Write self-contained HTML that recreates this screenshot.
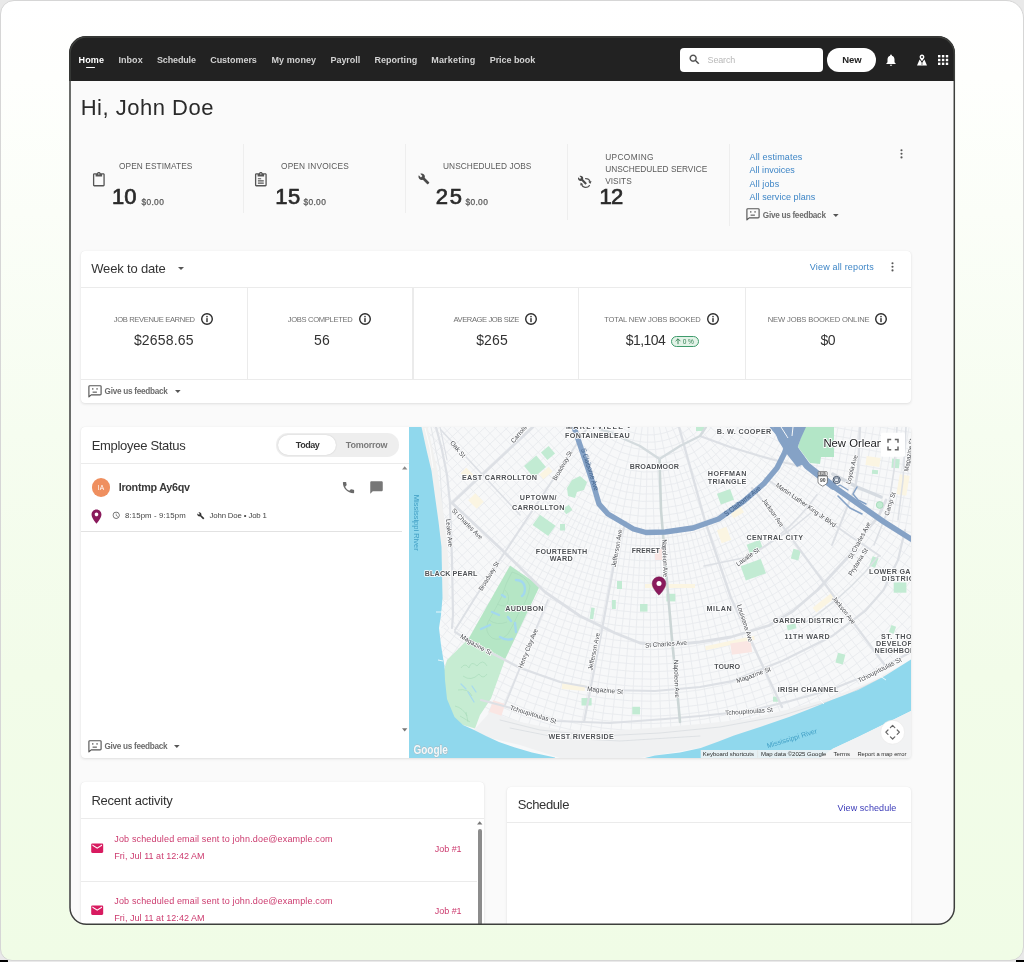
<!DOCTYPE html>
<html>
<head>
<meta charset="utf-8">
<title>Home</title>
<style>
*{box-sizing:border-box;margin:0;padding:0}
html,body{width:1024px;height:962px;overflow:hidden}
body{background:#e9e9e9;font-family:"Liberation Sans",sans-serif;color:#333;position:relative}
.abs{position:absolute}
.t{position:absolute;white-space:pre;line-height:1}
svg{position:absolute;overflow:visible}
#corner-l{left:0;top:960px;width:8px;height:2px;background:#000}
#corner-r{left:1016px;top:960px;width:8px;height:2px;background:#000}
#frame{left:0;top:0;width:1024px;height:961px;border:1px solid #d6d6d6;border-radius:14px 18px 14px 12px;background:linear-gradient(180deg,#ffffff 0%,#fefffd 8%,#fbfef8 22%,#f6fdf0 45%,#f2fce9 70%,#f0fce6 100%)}
#win{left:69px;top:36px;width:886px;height:889px;border-radius:17px;background:#fafafa;overflow:hidden}
#winin{will-change:transform;position:absolute;left:-69px;top:-36px;width:1024px;height:962px}
#nav{left:69px;top:36px;width:886px;height:45px;background:#222}
.card{position:absolute;background:#fff;border-radius:4px;box-shadow:0 1px 3px rgba(0,0,0,.11),0 0 1px rgba(0,0,0,.10)}
.hl{position:absolute;height:1px;background:#ebebeb}
.vl{position:absolute;width:1px;background:#ebebeb}
</style>
</head>
<body>
<div id="corner-l" class="abs"></div><div id="corner-r" class="abs"></div>
<div id="frame" class="abs"></div>
<div id="win" class="abs"><div id="winin">

<!-- nav -->
<div id="nav" class="abs"></div>
<div class="abs" style="left:86px;top:66.5px;width:9.3px;height:1.5px;background:#fff;border-radius:1px"></div>
<div class="abs" style="left:680px;top:48px;width:143px;height:23.5px;background:#fff;border-radius:4px"></div>
<svg style="left:688px;top:53px" width="13" height="13" viewBox="0 0 24 24"><path fill="#444" stroke="#444" stroke-width="0.5" d="M15.5 14h-.79l-.28-.27C15.41 12.59 16 11.11 16 9.5 16 5.91 13.09 3 9.5 3S3 5.91 3 9.5 5.91 16 9.5 16c1.61 0 3.09-.59 4.23-1.57l.27.28v.79l5 4.99L20.49 19l-4.99-5zm-6 0C7.01 14 5 11.99 5 9.5S7.01 5 9.5 5 14 7.01 14 9.5 11.99 14 9.5 14z"/></svg>
<div class="abs" style="left:827px;top:48px;width:48.5px;height:24px;background:#fff;border-radius:12px"></div>
<svg style="left:883.8px;top:52.5px" width="14" height="14" viewBox="0 0 24 24"><path fill="#fff" d="M12 22c1.1 0 2-.9 2-2h-4c0 1.1.89 2 2 2zm6-6v-5c0-3.07-1.64-5.64-4.5-6.32V4c0-.83-.67-1.5-1.5-1.5s-1.5.67-1.5 1.5v.68C7.63 5.36 6 7.92 6 11v5l-2 2v1h16v-1l-2-2z"/></svg>
<svg style="left:916px;top:53.5px" width="12" height="12" viewBox="0 0 12 12"><path fill="#fff" fill-rule="evenodd" d="M6 0.6C4.6 0.6 3.6 1.6 3.6 2.9C3.6 4.4 6 7 6 7S8.4 4.4 8.4 2.9C8.4 1.6 7.4 0.6 6 0.6zM6 1.9a1 1 0 1 1 0 2a1 1 0 0 1 0-2z"/><path fill="#fff" d="M3.6 5.6L1 11.6H11L8.4 5.6L6.9 7.6V8.6H5.1V7.6zM5.4 9.4H6.6V10.6H5.4z" fill-rule="evenodd"/></svg>
<svg style="left:938.1px;top:54.5px" width="11" height="11" viewBox="0 0 11 11" fill="#fff"><rect x="0.00" y="0.00" width="2.4" height="2.4"/><rect x="0.00" y="3.80" width="2.4" height="2.4"/><rect x="0.00" y="7.60" width="2.4" height="2.4"/><rect x="3.90" y="0.00" width="2.4" height="2.4"/><rect x="3.90" y="3.80" width="2.4" height="2.4"/><rect x="3.90" y="7.60" width="2.4" height="2.4"/><rect x="7.80" y="0.00" width="2.4" height="2.4"/><rect x="7.80" y="3.80" width="2.4" height="2.4"/><rect x="7.80" y="7.60" width="2.4" height="2.4"/></svg>
<div class="t" style="left:78.6px;top:56.0px;font-size:9px;color:#fff;font-weight:bold;letter-spacing:0.14px">Home</div>
<div class="t" style="left:118.5px;top:56.0px;font-size:9px;color:#d2d2d2;font-weight:bold;letter-spacing:0.04px">Inbox</div>
<div class="t" style="left:157.0px;top:56.0px;font-size:9px;color:#d2d2d2;font-weight:bold;letter-spacing:-0.15px">Schedule</div>
<div class="t" style="left:210.2px;top:56.0px;font-size:9px;color:#d2d2d2;font-weight:bold;letter-spacing:-0.04px">Customers</div>
<div class="t" style="left:271.4px;top:56.0px;font-size:9px;color:#d2d2d2;font-weight:bold;letter-spacing:0.10px">My money</div>
<div class="t" style="left:330.5px;top:56.0px;font-size:9px;color:#d2d2d2;font-weight:bold;letter-spacing:-0.05px">Payroll</div>
<div class="t" style="left:374.5px;top:56.0px;font-size:9px;color:#d2d2d2;font-weight:bold;letter-spacing:0.02px">Reporting</div>
<div class="t" style="left:431.2px;top:56.0px;font-size:9px;color:#d2d2d2;font-weight:bold;letter-spacing:0.20px">Marketing</div>
<div class="t" style="left:489.7px;top:56.0px;font-size:9px;color:#d2d2d2;font-weight:bold;letter-spacing:-0.05px">Price book</div>
<div class="t" style="left:707.6px;top:56.0px;font-size:9px;color:#b9b9b9;letter-spacing:-0.17px">Search</div>
<div class="t" style="left:842.2px;top:55.0px;font-size:9.5px;color:#222;font-weight:bold">New</div>

<!-- stats -->
<div class="vl" style="left:243px;top:144px;height:69px;background:#eeeeee"></div>
<div class="vl" style="left:405px;top:144px;height:69px;background:#eeeeee"></div>
<div class="vl" style="left:567px;top:144px;height:76px;background:#eeeeee"></div>
<div class="vl" style="left:729px;top:144px;height:82px;background:#eeeeee"></div>
<svg style="left:91px;top:171.6px" width="15.7" height="15.7" viewBox="0 0 24 24"><path fill="#555" d="M19 2h-4.18C14.4.84 13.3 0 12 0c-1.3 0-2.4.84-2.82 2H5c-1.1 0-2 .9-2 2v16c0 1.1.9 2 2 2h14c1.1 0 2-.9 2-2V4c0-1.1-.9-2-2-2zm-7 0c.55 0 1 .45 1 1s-.45 1-1 1-1-.45-1-1 .45-1 1-1zm7 18H5V4h2v3h10V4h2v16z"/></svg>
<svg style="left:253px;top:171.6px" width="15.7" height="15.7" viewBox="0 0 24 24"><path fill="#555" d="M19 2h-4.18C14.4.84 13.3 0 12 0c-1.3 0-2.4.84-2.82 2H5c-1.1 0-2 .9-2 2v16c0 1.1.9 2 2 2h14c1.1 0 2-.9 2-2V4c0-1.1-.9-2-2-2zm-7 0c.55 0 1 .45 1 1s-.45 1-1 1-1-.45-1-1 .45-1 1-1zm7 18H5V4h2v3h10V4h2v16z M7.5 9.5h5v1.7h-5zM7.5 12.8h9v1.7h-9zM7.5 16.1h9v1.7h-9z"/></svg>
<svg style="left:417.5px;top:172.5px" width="11.8" height="11.8" viewBox="0 0 24 24"><path fill="#4a4a4a" d="M22.7 19l-9.1-9.1c.9-2.3.4-5-1.5-6.9-2-2-5-2.4-7.4-1.3L9 6 6 9 1.6 4.7C.4 7.1.9 10.1 2.9 12.1c1.9 1.9 4.6 2.4 6.9 1.5l9.1 9.1c.4.4 1 .4 1.4 0l2.3-2.3c.5-.4.5-1.1.1-1.4z"/></svg>
<svg style="left:577px;top:174.5px" width="16" height="15" viewBox="0 0 16 15"><g fill="none" stroke="#555" stroke-width="1.3" stroke-linecap="round"><path d="M8.6 3.6A4.6 4.6 0 0 1 13.2 7.4"/><path d="M12.4 10.6A4.6 4.6 0 0 1 4.4 9.2"/></g><path fill="#555" d="M14.6 6.2L13.3 9L11.2 6.6zM3.2 10.6L3.6 7.6L6.3 9.2z"/><g transform="translate(0.6,0.4) scale(0.4)"><path fill="#4a4a4a" d="M22.7 19l-9.1-9.1c.9-2.3.4-5-1.5-6.9-2-2-5-2.4-7.4-1.3L9 6 6 9 1.6 4.7C.4 7.1.9 10.1 2.9 12.1c1.9 1.9 4.6 2.4 6.9 1.5l9.1 9.1c.4.4 1 .4 1.4 0l2.3-2.3c.5-.4.5-1.1.1-1.4z"/></g></svg>
<svg style="left:746.2px;top:208.3px" width="14" height="13" viewBox="0 0 14 13"><path fill="none" stroke="#555" stroke-width="1.15" stroke-linejoin="round" d="M1.8 0.7H12.2Q13.1 0.7 13.1 1.6V8.9Q13.1 9.8 12.2 9.8H3.2L0.9 11.9V1.6Q0.9 0.7 1.8 0.7z"/><rect x="4.1" y="3.2" width="1.3" height="1.4" fill="#555"/><rect x="8.4" y="3.2" width="1.3" height="1.4" fill="#555"/><rect x="4.6" y="6.6" width="4.3" height="1.1" fill="#555"/></svg>
<svg style="left:832.8px;top:213.9px" width="5.6" height="3" viewBox="0 0 10 5"><path fill="#555" d="M0 0h10L5 5z"/></svg>
<svg style="left:899.5px;top:148.6px" width="3" height="10" viewBox="0 0 3 10" fill="#555"><circle cx="1.5" cy="1.2" r="1.05"/><circle cx="1.5" cy="4.8" r="1.05"/><circle cx="1.5" cy="8.4" r="1.05"/></svg>
<div class="t" style="left:119.0px;top:162.0px;font-size:8.3px;color:#5a5a5a;letter-spacing:0.09px">OPEN ESTIMATES</div>
<div class="t" style="left:112.0px;top:186.0px;font-size:22px;color:#2a2a2a;letter-spacing:0.08px;-webkit-text-stroke:0.7px #2a2a2a">10</div>
<div class="t" style="left:141.4px;top:198.0px;font-size:8.4px;color:#5a5a5a;letter-spacing:0.36px;-webkit-text-stroke:0.25px #5a5a5a">$0.00</div>
<div class="t" style="left:281.0px;top:162.0px;font-size:8.3px;color:#5a5a5a;letter-spacing:0.19px">OPEN INVOICES</div>
<div class="t" style="left:275.2px;top:186.0px;font-size:22px;color:#2a2a2a;letter-spacing:0.61px;-webkit-text-stroke:0.7px #2a2a2a">15</div>
<div class="t" style="left:303.4px;top:198.0px;font-size:8.4px;color:#5a5a5a;letter-spacing:0.36px;-webkit-text-stroke:0.25px #5a5a5a">$0.00</div>
<div class="t" style="left:443.0px;top:162.0px;font-size:8.3px;color:#5a5a5a;letter-spacing:0.08px">UNSCHEDULED JOBS</div>
<div class="t" style="left:435.7px;top:186.0px;font-size:22px;color:#2a2a2a;letter-spacing:1.74px;-webkit-text-stroke:0.7px #2a2a2a">25</div>
<div class="t" style="left:465.4px;top:198.0px;font-size:8.4px;color:#5a5a5a;letter-spacing:0.36px;-webkit-text-stroke:0.25px #5a5a5a">$0.00</div>
<div class="t" style="left:605.2px;top:153.0px;font-size:8.3px;color:#5a5a5a;letter-spacing:0.38px">UPCOMING</div>
<div class="t" style="left:605.2px;top:165.0px;font-size:8.3px;color:#5a5a5a;letter-spacing:0.02px">UNSCHEDULED SERVICE</div>
<div class="t" style="left:605.2px;top:177.0px;font-size:8.3px;color:#5a5a5a;letter-spacing:0.04px">VISITS</div>
<div class="t" style="left:599.6px;top:186.0px;font-size:22px;color:#2a2a2a;letter-spacing:-0.72px;-webkit-text-stroke:0.7px #2a2a2a">12</div>
<div class="t" style="left:749.5px;top:153.0px;font-size:9px;color:#3d85c6;letter-spacing:0.15px">All estimates</div>
<div class="t" style="left:749.5px;top:166.0px;font-size:9px;color:#3d85c6;letter-spacing:0.03px">All invoices</div>
<div class="t" style="left:749.5px;top:180.0px;font-size:9px;color:#3d85c6;letter-spacing:0.09px">All jobs</div>
<div class="t" style="left:749.5px;top:193.0px;font-size:9px;color:#3d85c6;letter-spacing:0.05px">All service plans</div>
<div class="t" style="left:762.8px;top:212.0px;font-size:8.2px;color:#6c6c6c;font-weight:bold;letter-spacing:-0.28px">Give us feedback</div>

<!-- week -->
<div class="card" style="left:81px;top:251px;width:830px;height:152px"></div>
<div class="hl" style="left:81px;top:287px;width:830px"></div>
<div class="hl" style="left:81px;top:379px;width:830px"></div>
<div class="vl" style="left:246.5px;top:288px;height:91px"></div>
<div class="vl" style="left:412.0px;top:288px;height:91px"></div>
<div class="vl" style="left:413.0px;top:288px;height:91px"></div>
<div class="vl" style="left:578.0px;top:288px;height:91px"></div>
<div class="vl" style="left:744.5px;top:288px;height:91px"></div>
<svg style="left:177.7px;top:267px" width="6" height="3.2" viewBox="0 0 10 5"><path fill="#555" d="M0 0h10L5 5z"/></svg>
<svg style="left:891.1px;top:261.8px" width="3" height="10" viewBox="0 0 3 10" fill="#555"><circle cx="1.5" cy="1.2" r="1.05"/><circle cx="1.5" cy="4.8" r="1.05"/><circle cx="1.5" cy="8.4" r="1.05"/></svg>
<svg style="left:200.2px;top:311.9px" width="14" height="14" viewBox="0 0 14 14"><circle cx="7" cy="7" r="5.3" fill="none" stroke="#2c2c2c" stroke-width="1.4"/><rect x="6.3" y="3.9" width="1.4" height="1.4" fill="#2c2c2c"/><rect x="6.3" y="6.1" width="1.4" height="4" fill="#2c2c2c"/></svg>
<svg style="left:358.0px;top:311.9px" width="14" height="14" viewBox="0 0 14 14"><circle cx="7" cy="7" r="5.3" fill="none" stroke="#2c2c2c" stroke-width="1.4"/><rect x="6.3" y="3.9" width="1.4" height="1.4" fill="#2c2c2c"/><rect x="6.3" y="6.1" width="1.4" height="4" fill="#2c2c2c"/></svg>
<svg style="left:524.3px;top:311.9px" width="14" height="14" viewBox="0 0 14 14"><circle cx="7" cy="7" r="5.3" fill="none" stroke="#2c2c2c" stroke-width="1.4"/><rect x="6.3" y="3.9" width="1.4" height="1.4" fill="#2c2c2c"/><rect x="6.3" y="6.1" width="1.4" height="4" fill="#2c2c2c"/></svg>
<svg style="left:706.0px;top:311.9px" width="14" height="14" viewBox="0 0 14 14"><circle cx="7" cy="7" r="5.3" fill="none" stroke="#2c2c2c" stroke-width="1.4"/><rect x="6.3" y="3.9" width="1.4" height="1.4" fill="#2c2c2c"/><rect x="6.3" y="6.1" width="1.4" height="4" fill="#2c2c2c"/></svg>
<svg style="left:873.9px;top:311.9px" width="14" height="14" viewBox="0 0 14 14"><circle cx="7" cy="7" r="5.3" fill="none" stroke="#2c2c2c" stroke-width="1.4"/><rect x="6.3" y="3.9" width="1.4" height="1.4" fill="#2c2c2c"/><rect x="6.3" y="6.1" width="1.4" height="4" fill="#2c2c2c"/></svg>
<div class="abs" style="left:670.8px;top:335.8px;width:28px;height:11px;border:1px solid #3f9b6c;border-radius:5.5px;background:#e3f3e8"></div>
<svg style="left:675px;top:338.2px" width="6" height="6.4" viewBox="0 0 6 6.4"><path fill="none" stroke="#2e7d4f" stroke-width="0.9" d="M3 6.2V0.9M0.6 3.2L3 0.8L5.4 3.2"/></svg>
<svg style="left:88.0px;top:384.7px" width="14" height="13" viewBox="0 0 14 13"><path fill="none" stroke="#555" stroke-width="1.15" stroke-linejoin="round" d="M1.8 0.7H12.2Q13.1 0.7 13.1 1.6V8.9Q13.1 9.8 12.2 9.8H3.2L0.9 11.9V1.6Q0.9 0.7 1.8 0.7z"/><rect x="4.1" y="3.2" width="1.3" height="1.4" fill="#555"/><rect x="8.4" y="3.2" width="1.3" height="1.4" fill="#555"/><rect x="4.6" y="6.6" width="4.3" height="1.1" fill="#555"/></svg>
<svg style="left:174.6px;top:390.3px" width="5.6" height="3" viewBox="0 0 10 5"><path fill="#555" d="M0 0h10L5 5z"/></svg>
<div class="t" style="left:91.2px;top:262.0px;font-size:13px;color:#333;letter-spacing:-0.16px">Week to date</div>
<div class="t" style="left:809.8px;top:263.0px;font-size:9px;color:#3d85c6;letter-spacing:0.17px">View all reports</div>
<div class="t" style="left:113.7px;top:316.0px;font-size:7.6px;color:#707070;letter-spacing:-0.35px">JOB REVENUE EARNED</div>
<div class="t" style="left:133.9px;top:333.0px;font-size:14px;color:#333;letter-spacing:0.19px">$2658.65</div>
<div class="t" style="left:287.8px;top:316.0px;font-size:7.6px;color:#707070;letter-spacing:-0.33px">JOBS COMPLETED</div>
<div class="t" style="left:314.1px;top:333.0px;font-size:14px;color:#333;letter-spacing:0.08px">56</div>
<div class="t" style="left:453.4px;top:316.0px;font-size:7.6px;color:#707070;letter-spacing:-0.40px">AVERAGE JOB SIZE</div>
<div class="t" style="left:476.2px;top:333.0px;font-size:14px;color:#333;letter-spacing:0.13px">$265</div>
<div class="t" style="left:604.2px;top:316.0px;font-size:7.6px;color:#707070;letter-spacing:-0.16px">TOTAL NEW JOBS BOOKED</div>
<div class="t" style="left:625.8px;top:333.0px;font-size:14px;color:#333;letter-spacing:-0.55px">$1,104</div>
<div class="t" style="left:767.7px;top:316.0px;font-size:7.6px;color:#707070;letter-spacing:-0.13px">NEW JOBS BOOKED ONLINE</div>
<div class="t" style="left:820.6px;top:333.0px;font-size:14px;color:#333;letter-spacing:-0.52px">$0</div>
<div class="t" style="left:682.7px;top:339.0px;font-size:6.6px;color:#2e7d4f;letter-spacing:1.65px">0%</div>
<div class="t" style="left:104.6px;top:388.0px;font-size:8.2px;color:#6c6c6c;font-weight:bold;letter-spacing:-0.28px">Give us feedback</div>

<!-- emp -->
<div class="card" style="left:81px;top:427px;width:830px;height:331px"></div>
<div class="hl" style="left:81px;top:463px;width:328px"></div>
<div class="abs" style="left:276.4px;top:433.3px;width:122.6px;height:23.4px;border-radius:11.7px;background:#eeeeee"></div>
<div class="abs" style="left:278px;top:434.8px;width:58px;height:20.2px;border-radius:10.1px;background:#fff;box-shadow:0 0 1.5px rgba(0,0,0,.18)"></div>
<svg style="left:402.4px;top:466.2px" width="5.4" height="3.6" viewBox="0 0 10 6"><path fill="#8a8a8a" d="M0 6h10L5 0z"/></svg>
<svg style="left:402.4px;top:728.2px" width="5.4" height="3.6" viewBox="0 0 10 6"><path fill="#777" d="M0 0h10L5 6z"/></svg>
<div class="abs" style="left:91.5px;top:478px;width:18.6px;height:18.6px;border-radius:50%;background:#ef8f5f"></div>
<svg style="left:341px;top:480px" width="15" height="15" viewBox="0 0 24 24"><path fill="#6a6a6a" d="M6.62 10.79c1.44 2.83 3.76 5.14 6.59 6.59l2.2-2.2c.27-.27.67-.36 1.02-.24 1.12.37 2.33.57 3.57.57.55 0 1 .45 1 1V20c0 .55-.45 1-1 1-9.39 0-17-7.61-17-17 0-.55.45-1 1-1h3.5c.55 0 1 .45 1 1 0 1.25.2 2.45.57 3.57.11.35.03.74-.25 1.02l-2.2 2.2z"/></svg>
<svg style="left:369.4px;top:480px" width="15" height="15" viewBox="0 0 24 24"><path fill="#777" d="M20 2H4c-1.1 0-1.99.9-1.99 2L2 22l4-4h14c1.1 0 2-.9 2-2V4c0-1.1-.9-2-2-2z"/></svg>
<svg style="left:87.5px;top:507.5px" width="17" height="17" viewBox="0 0 24 24"><path fill="#8a1a5c" d="M12 2C8.13 2 5 5.13 5 9c0 5.25 7 13 7 13s7-7.75 7-13c0-3.87-3.13-7-7-7zm0 9.5c-1.38 0-2.5-1.12-2.5-2.5s1.12-2.5 2.5-2.5 2.5 1.12 2.5 2.5-1.12 2.5-2.5 2.5z"/></svg>
<svg style="left:111.6px;top:511.4px" width="8.4" height="8.4" viewBox="0 0 24 24"><path fill="#555" d="M11.99 2C6.47 2 2 6.48 2 12s4.47 10 9.99 10C17.52 22 22 17.52 22 12S17.52 2 11.99 2zM12 20c-4.42 0-8-3.58-8-8s3.58-8 8-8 8 3.58 8 8-3.58 8-8 8zm.5-13H11v6l5.25 3.15.75-1.23-4.5-2.67z"/></svg>
<svg style="left:196.5px;top:511.8px" width="7.6" height="7.6" viewBox="0 0 24 24"><path fill="#333" d="M22.7 19l-9.1-9.1c.9-2.3.4-5-1.5-6.9-2-2-5-2.4-7.4-1.3L9 6 6 9 1.6 4.7C.4 7.1.9 10.1 2.9 12.1c1.9 1.9 4.6 2.4 6.9 1.5l9.1 9.1c.4.4 1 .4 1.4 0l2.3-2.3c.5-.4.5-1.1.1-1.4z"/></svg>
<div class="hl" style="left:81px;top:531px;width:321px;background:#e2e2e2"></div>
<svg style="left:87.8px;top:739.8px" width="14" height="13" viewBox="0 0 14 13"><path fill="none" stroke="#555" stroke-width="1.15" stroke-linejoin="round" d="M1.8 0.7H12.2Q13.1 0.7 13.1 1.6V8.9Q13.1 9.8 12.2 9.8H3.2L0.9 11.9V1.6Q0.9 0.7 1.8 0.7z"/><rect x="4.1" y="3.2" width="1.3" height="1.4" fill="#555"/><rect x="8.4" y="3.2" width="1.3" height="1.4" fill="#555"/><rect x="4.6" y="6.6" width="4.3" height="1.1" fill="#555"/></svg>
<svg style="left:174.4px;top:745.4px" width="5.6" height="3" viewBox="0 0 10 5"><path fill="#555" d="M0 0h10L5 5z"/></svg>
<div class="abs" style="left:409px;top:427px;width:502px;height:331px;overflow:hidden;border-radius:0 4px 4px 0;background:#f3f4f5"><svg style="left:0;top:0" width="502" height="331" viewBox="409 427 502 331" font-family="Liberation Sans, sans-serif">
<defs><clipPath id="cw"><polygon points="409,427 590,427 473,601 452,628 409,628"/></clipPath><clipPath id="ce"><polygon points="590,427 911,427 911,758 409,758 409,628 452,628 473,601"/></clipPath></defs>
<filter id="bl" x="0" y="0" width="1" height="1"><feGaussianBlur stdDeviation="0.45"/></filter><g filter="url(#bl)">
<rect x="405" y="423" width="510" height="339" fill="#f7f8f9"/>
<path clip-path="url(#ce)" fill="none" stroke="#e9ebee" stroke-width="0.9" d="M686.6 390.7L998.6 504.2M788.4 432.3L994.8 514.1M736.3 414.5L990.8 523.8M785.1 440.1L986.5 533.4M684.8 394.8L982 542.9M781.3 447.7L977.2 552.2M731.5 424.1L972.1 561.4M777.1 455L966.7 570.5M682.6 398.8L961.1 579.4M772.5 462.1L955.3 588.1M725.7 433.1L949.2 596.7M767.5 469L942.9 605.1M679.9 402.4L936.3 613.3M762.1 475.5L929.5 621.3M718.8 441.4L922.5 629.2M756.4 481.8L915.2 636.8M676.8 405.7L907.8 644.2M750.3 487.7L900.1 651.4M711.1 448.9L892.3 658.4M743.8 493.2L884.2 665.2M673.4 408.7L876 671.7M737.1 498.4L867.6 678M702.6 455.4L859 684.1M730.1 503.2L850.2 689.9M669.7 411.2L841.3 695.5M722.9 507.6L832.2 700.8M693.4 461L823 705.8M715.4 511.5L813.6 710.6M665.7 413.4L804.1 715.1M707.7 515.1L794.5 719.4M683.7 465.5L784.7 723.4M699.8 518.1L774.9 727.1M661.5 415L764.9 730.5M691.7 520.8L754.9 733.6M673.5 468.8L744.8 736.5M683.5 523L734.6 739M657.1 416.2L724.3 741.3M675.2 524.7L714 743.3M662.9 471L703.6 745M666.8 525.9L693.2 746.4M652.6 416.8L682.7 747.5M658.4 526.7L672.2 748.3M652.2 471.9L661.7 748.8M649.9 527L651.2 749M648.1 417L640.7 748.9M641.4 526.8L630.2 748.5M641.5 471.7L619.7 747.8M633 526.1L609.2 746.9M643.6 416.6L598.8 745.6M624.6 525L588.4 744M630.9 470.3L578 742.2M616.2 523.4L567.7 740M639.2 415.8L557.5 737.6M608 521.3L547.3 734.8M620.5 467.6L537.3 731.8M599.9 518.7L527.3 728.5M634.8 414.4L517.4 724.9M592 515.7L507.6 721.1M610.4 463.8L497.9 716.9M584.2 512.3L488.4 712.5M630.7 412.6L479 707.9M576.7 508.4L469.7 702.9M600.9 458.9L460.5 697.7M569.4 504.1L451.5 692.3M626.8 410.3L442.7 686.6M562.3 499.4L434 680.6M591.9 453L425.5 674.4M555.5 494.3L417.2 668M623.2 407.6L409.1 661.3M549.1 488.9L401.1 654.4M583.7 446L393.4 647.3M542.9 483L385.9 640M619.9 404.5L378.5 632.4M537.1 476.9L371.4 624.7M576.4 438.2L364.5 616.7M531.6 470.4L357.9 608.6M617 401L351.4 600.3M526.5 463.6L345.2 591.8M569.9 429.6L339.3 583.1M521.8 456.5L333.6 574.2M614.5 397.2L328.1 565.2M704.2 394.9A58 58 0 0 1 597.8 404.2M711.2 397.2A65.4 65.4 0 0 1 591.3 407.7M718.2 399.5A72.8 72.8 0 0 1 584.7 411.2M725.3 401.8A80.2 80.2 0 0 1 578.2 414.7M732.3 404.1A87.6 87.6 0 0 1 571.7 418.1M739.4 406.4A95 95 0 0 1 565.1 421.6M746.4 408.6A102.4 102.4 0 0 1 558.6 425.1M753.4 410.9A109.8 109.8 0 0 1 552.1 428.5M760.5 413.2A117.2 117.2 0 0 1 545.5 432M767.5 415.5A124.6 124.6 0 0 1 539 435.5M774.5 417.8A132 132 0 0 1 532.5 439M781.6 420.1A139.4 139.4 0 0 1 525.9 442.4M788.6 422.4A146.8 146.8 0 0 1 519.4 445.9M795.7 424.7A154.2 154.2 0 0 1 512.8 449.4M802.7 426.9A161.6 161.6 0 0 1 506.3 452.9M809.7 429.2A169 169 0 0 1 499.8 456.3M816.8 431.5A176.4 176.4 0 0 1 493.2 459.8M823.8 433.8A183.8 183.8 0 0 1 486.7 463.3M830.8 436.1A191.2 191.2 0 0 1 480.2 466.8M837.9 438.4A198.6 198.6 0 0 1 473.6 470.2M844.9 440.7A206 206 0 0 1 467.1 473.7M852 442.9A213.4 213.4 0 0 1 460.6 477.2M859 445.2A220.8 220.8 0 0 1 454 480.7M866 447.5A228.2 228.2 0 0 1 447.5 484.1M873.1 449.8A235.6 235.6 0 0 1 441 487.6M880.1 452.1A243 243 0 0 1 434.4 491.1M887.1 454.4A250.4 250.4 0 0 1 427.9 494.6M894.2 456.7A257.8 257.8 0 0 1 421.4 498M901.2 459A265.2 265.2 0 0 1 414.8 501.5M908.3 461.2A272.6 272.6 0 0 1 408.3 505M915.3 463.5A280 280 0 0 1 401.8 508.5M922.3 465.8A287.4 287.4 0 0 1 395.2 511.9M929.4 468.1A294.8 294.8 0 0 1 388.7 515.4M936.4 470.4A302.2 302.2 0 0 1 382.2 518.9M943.4 472.7A309.6 309.6 0 0 1 375.6 522.3M950.5 475A317 317 0 0 1 369.1 525.8M957.5 477.2A324.4 324.4 0 0 1 362.6 529.3M964.6 479.5A331.8 331.8 0 0 1 356 532.8M971.6 481.8A339.2 339.2 0 0 1 349.5 536.2M978.6 484.1A346.6 346.6 0 0 1 343 539.7M985.7 486.4A354 354 0 0 1 336.4 543.2M992.7 488.7A361.4 361.4 0 0 1 329.9 546.7M999.7 491A368.8 368.8 0 0 1 323.4 550.1"/>
<path clip-path="url(#cw)" fill="none" stroke="#e9ebee" stroke-width="0.9" d="M539.2 128L893.8 508.3M477.4 114.5L97.1 469.1M533.7 133L888.4 513.3M482.7 120.2L102.4 474.8M528.3 138.1L883 518.4M488 125.9L107.7 480.5M522.9 143.1L877.6 523.4M493.3 131.6L113 486.3M517.5 148.2L872.2 528.5M498.6 137.3L118.3 492M512.1 153.2L866.7 533.5M504 143L123.7 497.7M506.7 158.3L861.3 538.6M509.3 148.7L129 503.4M501.3 163.3L855.9 543.6M514.6 154.4L134.3 509.1M495.9 168.4L850.5 548.7M519.9 160.1L139.6 514.8M490.5 173.4L845.1 553.7M525.2 165.8L144.9 520.5M485 178.4L839.7 558.7M530.6 171.5L150.3 526.2M479.6 183.5L834.3 563.8M535.9 177.2L155.6 531.9M474.2 188.5L828.9 568.8M541.2 183L160.9 537.6M468.8 193.6L823.4 573.9M546.5 188.7L166.2 543.3M463.4 198.6L818 578.9M551.8 194.4L171.5 549M458 203.7L812.6 584M557.2 200.1L176.9 554.7M452.6 208.7L807.2 589M562.5 205.8L182.2 560.4M447.2 213.8L801.8 594.1M567.8 211.5L187.5 566.1M441.7 218.8L796.4 599.1M573.1 217.2L192.8 571.8M436.3 223.9L791 604.2M578.4 222.9L198.1 577.5M430.9 228.9L785.6 609.2M583.8 228.6L203.5 583.2M425.5 234L780.1 614.3M589.1 234.3L208.8 588.9M420.1 239L774.7 619.3M594.4 240L214.1 594.6M414.7 244.1L769.3 624.4M599.7 245.7L219.4 600.3M409.3 249.1L763.9 629.4M605 251.4L224.7 606M403.9 254.1L758.5 634.5M610.4 257.1L230.1 611.8M398.4 259.2L753.1 639.5M615.7 262.8L235.4 617.5M393 264.2L747.7 644.5M621 268.5L240.7 623.2M387.6 269.3L742.3 649.6M626.3 274.2L246 628.9M382.2 274.3L736.9 654.6M631.6 279.9L251.3 634.6M376.8 279.4L731.4 659.7M637 285.6L256.7 640.3M371.4 284.4L726 664.7M642.3 291.3L262 646M366 289.5L720.6 669.8M647.6 297L267.3 651.7M360.6 294.5L715.2 674.8M652.9 302.7L272.6 657.4M355.2 299.6L709.8 679.9M658.2 308.5L277.9 663.1M349.7 304.6L704.4 684.9M663.6 314.2L283.3 668.8M344.3 309.7L699 690M668.9 319.9L288.6 674.5M338.9 314.7L693.6 695M674.2 325.6L293.9 680.2M333.5 319.8L688.1 700.1M679.5 331.3L299.2 685.9M328.1 324.8L682.7 705.1M684.8 337L304.5 691.6M322.7 329.8L677.3 710.2M690.2 342.7L309.8 697.3M317.3 334.9L671.9 715.2M695.5 348.4L315.2 703M311.9 339.9L666.5 720.2M700.8 354.1L320.5 708.7M306.4 345L661.1 725.3M706.1 359.8L325.8 714.4M301 350L655.7 730.3M711.4 365.5L331.1 720.1M295.6 355.1L650.3 735.4M716.7 371.2L336.4 725.8M290.2 360.1L644.8 740.4M722.1 376.9L341.8 731.5M284.8 365.2L639.4 745.5M727.4 382.6L347.1 737.3M279.4 370.2L634 750.5M732.7 388.3L352.4 743M274 375.3L628.6 755.6M738 394L357.7 748.7M268.6 380.3L623.2 760.6M743.3 399.7L363 754.4M263.1 385.4L617.8 765.7M748.7 405.4L368.4 760.1M257.7 390.4L612.4 770.7M754 411.1L373.7 765.8M252.3 395.5L607 775.8M759.3 416.8L379 771.5M246.9 400.5L601.6 780.8M764.6 422.5L384.3 777.2M241.5 405.5L596.1 785.9M769.9 428.2L389.6 782.9M236.1 410.6L590.7 790.9M775.3 434L395 788.6M230.7 415.6L585.3 795.9M780.6 439.7L400.3 794.3M225.3 420.7L579.9 801M785.9 445.4L405.6 800M219.9 425.7L574.5 806M791.2 451.1L410.9 805.7M214.4 430.8L569.1 811.1M796.5 456.8L416.2 811.4M209 435.8L563.7 816.1M801.9 462.5L421.6 817.1M203.6 440.9L558.3 821.2M807.2 468.2L426.9 822.8M198.2 445.9L552.8 826.2M812.5 473.9L432.2 828.5M192.8 451L547.4 831.3M817.8 479.6L437.5 834.2M187.4 456L542 836.3M823.1 485.3L442.8 839.9M182 461.1L536.6 841.4M828.5 491L448.2 845.6M176.6 466.1L531.2 846.4M833.8 496.7L453.5 851.3M171.1 471.2L525.8 851.5M839.1 502.4L458.8 857M165.7 476.2L520.4 856.5M844.4 508.1L464.1 862.8M160.3 481.3L515 861.6M849.7 513.8L469.4 868.5M154.9 486.3L509.5 866.6M855.1 519.5L474.8 874.2M149.5 491.3L504.1 871.6M860.4 525.2L480.1 879.9M144.1 496.4L498.7 876.7M865.7 530.9L485.4 885.6M138.7 501.4L493.3 881.7M871 536.6L490.7 891.3M133.3 506.5L487.9 886.8M876.3 542.3L496 897M127.8 511.5L482.5 891.8M881.7 548L501.4 902.7M122.4 516.6L477.1 896.9M887 553.7L506.7 908.4M117 521.6L471.7 901.9M892.3 559.5L512 914.1M111.6 526.7L466.3 907M897.6 565.2L517.3 919.8M106.2 531.7L460.8 912M902.9 570.9L522.6 925.5"/>
<clipPath id="cc"><polygon points="788,427 911,427 911,540 883.5,521.6 858,503.8 832.8,486 807,465.7 792,445"/></clipPath>
<polygon fill="#f7f8f9" points="788,427 911,427 911,540 883.5,521.6 858,503.8 832.8,486 807,465.7 792,445"/>
<path clip-path="url(#cc)" fill="none" stroke="#e9ebee" stroke-width="0.9" d="M781.3 351.3L958.6 382.6M769.1 374.3L737.9 551.6M779.9 359.4L957.1 390.6M776 375.6L744.8 552.8M778.5 367.5L955.7 398.7M782.9 376.8L751.6 554M777 375.5L954.3 406.8M789.8 378L758.5 555.3M775.6 383.6L952.9 414.9M796.7 379.2L765.4 556.5M774.2 391.7L951.4 422.9M803.6 380.4L772.3 557.7M772.8 399.8L950 431M810.5 381.6L779.2 558.9M771.3 407.8L948.6 439.1M817.4 382.9L786.1 560.1M769.9 415.9L947.2 447.2M824.3 384.1L793 561.3M768.5 424L945.8 455.3M831.2 385.3L799.9 562.6M767.1 432.1L944.3 463.3M838.1 386.5L806.8 563.8M765.6 440.1L942.9 471.4M844.9 387.7L813.7 565M764.2 448.2L941.5 479.5M851.8 388.9L820.6 566.2M762.8 456.3L940.1 487.6M858.7 390.2L827.5 567.4M761.4 464.4L938.6 495.6M865.6 391.4L834.4 568.6M759.9 472.4L937.2 503.7M872.5 392.6L841.3 569.8M758.5 480.5L935.8 511.8M879.4 393.8L848.2 571.1M757.1 488.6L934.4 519.9M886.3 395L855.1 572.3M755.7 496.7L932.9 527.9M893.2 396.2L861.9 573.5M754.2 504.7L931.5 536M900.1 397.4L868.8 574.7M752.8 512.8L930.1 544.1M907 398.7L875.7 575.9M751.4 520.9L928.7 552.2M913.9 399.9L882.6 577.1M750 529L927.2 560.2M920.8 401.1L889.5 578.4M748.6 537.1L925.8 568.3M927.7 402.3L896.4 579.6M747.1 545.1L924.4 576.4M934.6 403.5L903.3 580.8M745.7 553.2L923 584.5M941.5 404.7L910.2 582M744.3 561.3L921.5 592.5M948.4 406L917.1 583.2M742.9 569.4L920.1 600.6M955.2 407.2L924 584.4M741.4 577.4L918.7 608.7M962.1 408.4L930.9 585.7"/>
<rect x="527" y="459" width="16" height="15" fill="#c2ebd3" transform="rotate(-40 535 466.5)"/>
<rect x="543" y="448" width="10" height="10" fill="#c2ebd3" transform="rotate(-40 548 453)"/>
<rect x="534.5" y="519" width="19.1" height="12.7" fill="#c2ebd3" transform="rotate(35 544 525.4)"/>
<rect x="563.7" y="506.3" width="7.6" height="6.4" fill="#c2ebd3" transform="rotate(-35 567.5 509.5)"/>
<rect x="560" y="524" width="5" height="6.5" fill="#c2ebd3" transform="rotate(0 562.5 527.2)"/>
<rect x="617" y="581" width="5" height="8" fill="#c2ebd3" transform="rotate(0 619.5 585)"/>
<rect x="718.5" y="491" width="14" height="11.5" fill="#c2ebd3" transform="rotate(-20 725.5 496.8)"/>
<rect x="747.7" y="542" width="14" height="8.8" fill="#c2ebd3" transform="rotate(-20 754.7 546.4)"/>
<rect x="742.6" y="562.2" width="21.4" height="15.2" fill="#c2ebd3" transform="rotate(-20 753.3 569.8)"/>
<rect x="792" y="549.5" width="7.7" height="10.2" fill="#c2ebd3" transform="rotate(15 795.9 554.6)"/>
<rect x="891.8" y="458.8" width="7.6" height="9.2" fill="#c2ebd3" transform="rotate(5 895.6 463.4)"/>
<rect x="872" y="470" width="6" height="4" fill="#c2ebd3" transform="rotate(5 875 472)"/>
<rect x="893.7" y="582.5" width="12.7" height="10.2" fill="#c2ebd3" transform="rotate(0 900 587.6)"/>
<rect x="870.8" y="557" width="6.2" height="10" fill="#c2ebd3" transform="rotate(20 873.9 562)"/>
<rect x="612" y="600" width="3.8" height="9" fill="#c2ebd3" transform="rotate(0 613.9 604.5)"/>
<rect x="640" y="604" width="7.5" height="7.6" fill="#c2ebd3" transform="rotate(0 643.8 607.8)"/>
<rect x="590.4" y="607.8" width="3.6" height="11.2" fill="#c2ebd3" transform="rotate(8 592.2 613.4)"/>
<rect x="581.5" y="698" width="10.1" height="7.5" fill="#c2ebd3" transform="rotate(0 586.5 701.8)"/>
<rect x="632.3" y="706.8" width="7.7" height="7.6" fill="#c2ebd3" transform="rotate(0 636.1 710.6)"/>
<rect x="666.4" y="593.8" width="8.9" height="7.6" fill="#c2ebd3" transform="rotate(0 670.8 597.6)"/>
<rect x="787" y="624.3" width="9" height="5.1" fill="#c2ebd3" transform="rotate(-15 791.5 626.8)"/>
<rect x="836.6" y="653.5" width="7.6" height="10.1" fill="#c2ebd3" transform="rotate(15 840.4 658.5)"/>
<rect x="890" y="625.6" width="5" height="7.4" fill="#c2ebd3" transform="rotate(20 892.5 629.3)"/>
<rect x="773" y="696.7" width="5" height="5" fill="#c2ebd3" transform="rotate(0 775.5 699.2)"/>
<rect x="696" y="427" width="8" height="4" fill="#c2ebd3" transform="rotate(0 700 429)"/>
<polygon fill="#c2ebd3" points="572,480 580,476 587,482 584,490 577,492 575,498 568,496 567,488"/>
<polygon fill="#b3e6c7" points="804,427 834,427 834,457 821,457 820,464 810,463 798,447"/>
<rect x="462" y="470" width="10" height="8" fill="#fbf5e2" transform="rotate(45 467 474)"/>
<rect x="470" y="496" width="12" height="10" fill="#fbf5e2" transform="rotate(45 476 501)"/>
<rect x="540" y="470" width="12" height="6" fill="#fbf5e2" transform="rotate(-40 546 473)"/>
<rect x="562" y="684" width="23" height="6" fill="#fbf5e2" transform="rotate(5 573.5 687)"/>
<rect x="719" y="528" width="10" height="14" fill="#fbf5e2" transform="rotate(-20 724 535)"/>
<rect x="730" y="505" width="12" height="11" fill="#fbf5e2" transform="rotate(-30 736 510.5)"/>
<rect x="866" y="457" width="14" height="9" fill="#fbf5e2" transform="rotate(8 873 461.5)"/>
<rect x="898" y="475" width="10" height="20" fill="#fbf5e2" transform="rotate(10 903 485)"/>
<rect x="645" y="584" width="50" height="4" fill="#fbf5e2" transform="rotate(0 670 586)"/>
<rect x="705" y="641" width="50" height="4" fill="#fbf5e2" transform="rotate(-12 730 643)"/>
<rect x="812" y="600" width="23" height="6" fill="#fbf5e2" transform="rotate(-38 823.5 603)"/>
<rect x="731" y="642" width="20.5" height="11.5" fill="#fae6e3" transform="rotate(-8 741.2 647.8)"/>
<rect x="490" y="701.7" width="12.8" height="17.8" fill="#fae6e3" transform="rotate(18 496.4 710.6)"/>
<rect x="655" y="548" width="7" height="12" fill="#fae6e3" transform="rotate(0 658.5 554)"/>
<polygon fill="#b5e6c5" points="510,565.6 539.8,586 505.2,659 468.7,638.6"/>
<polygon fill="#c6ecd2" points="468.7,638.6 505.2,659 491,698.5 480,715 475,728.5 463,725 453.7,719 446,700 443.4,672 447,660 453.7,653.6"/>
<path fill="none" stroke="#a9dcbb" stroke-width="0.8" d="M512 572q14 4 18 14q-2 14 -10 24q-6 14 -12 24q-8 8 -16 4q-8 -6 -4 -16q8 -14 14 -26q4 -14 10 -24M505 590q6 6 2 14M497 604q8 4 14 0M489 620q8 6 18 2"/>
<path fill="none" stroke="#a3d8ee" stroke-width="2.4" stroke-linecap="round" d="M516 580q8 0 9 8q0 6 -3 8M502 595l3 2M492 612l7 3M508 617l3 4M481 629l9 -4M500 637q6 4 12 2M515 623l1 9"/>
<path fill="none" stroke="#abdcbc" stroke-width="0.7" d="M461 668q4 -6 8 0q2 -8 8 -2q6 -8 10 0M463 676q8 6 16 -2q4 6 8 0M458 690q10 -2 14 6M455 706q8 2 12 10M460 716l10 6M466 712l2 10"/>
<path fill="none" stroke="#a8daee" stroke-width="1.3" stroke-linecap="round" d="M461 684l5 5M468 692l6 10M472 686l4 6"/>
<path fill="none" stroke="#dde0e5" stroke-width="2.2" stroke-linejoin="round" stroke-linecap="round"  d="M436 427 L442 450 L447 475 L450 503 L452 560 L453 615 L452 628"/>
<path fill="none" stroke="#dde0e5" stroke-width="1.2" stroke-linejoin="round" stroke-linecap="round"  d="M440 427 L447 460"/>
<path fill="none" stroke="#e4e7ea" stroke-width="1" stroke-linejoin="round" stroke-linecap="round"  d="M431 427 L440 470 L443 520"/>
<path fill="none" stroke="#dde0e5" stroke-width="2.6" stroke-linejoin="round" stroke-linecap="round"  d="M533 427 L452 503"/>
<path fill="none" stroke="#dde0e5" stroke-width="1.6" stroke-linejoin="round" stroke-linecap="round"  d="M441 430 L520 515"/>
<path fill="none" stroke="#dde0e5" stroke-width="2.8" stroke-linejoin="round" stroke-linecap="round"  d="M452 503 L500 548 L545 592 L580 616 L615 633 L640 643 L665 645.5 L700 642 L731 637 L769 625.5 L793 611 L817.5 590 L848 557 L865.8 531.7 L878.5 516.5 L886 500"/>
<path fill="none" stroke="#dde0e5" stroke-width="2.2" stroke-linejoin="round" stroke-linecap="round"  d="M455 632 L476 645 L520 668 L560 682 L605 690 L655 691 L700 687 L731 681.4 L782 661 L832.8 635.7 L865.8 610.3 L883.5 590 L898 560 L905 530"/>
<path fill="none" stroke="#dde0e5" stroke-width="2.2" stroke-linejoin="round" stroke-linecap="round"  d="M481 700 L500 705 L533 714 L557 721 L610 723 L665 719 L700 716 L749 711 L790 701 L830 690 L870 674 L911 652"/>
<path fill="none" stroke="#ccd6d6" stroke-width="2.6" stroke-linejoin="round" stroke-linecap="round"  d="M659.5 459 L661 510 L665 558 L672 640 L678 700 L680 722"/>
<path fill="none" stroke="#dde0e5" stroke-width="2.2" stroke-linejoin="round" stroke-linecap="round"  d="M626 522 L617 548 L600 640 L584 722"/>
<path fill="none" stroke="#dde0e5" stroke-width="2.4" stroke-linejoin="round" stroke-linecap="round"  d="M679 427 L705 521 L731 598 L782 707"/>
<path fill="none" stroke="#dde0e5" stroke-width="2.2" stroke-linejoin="round" stroke-linecap="round"  d="M752 488 L773 513 L844 610 L887 668"/>
<path fill="none" stroke="#dde0e5" stroke-width="1.8" stroke-linejoin="round" stroke-linecap="round"  d="M765 478 L806 505 L850 536 L880 556"/>
<path fill="none" stroke="#dde0e5" stroke-width="2" stroke-linejoin="round" stroke-linecap="round"  d="M588 427 L562 466 L489 576 L473 601 L455 630"/>
<path fill="none" stroke="#dde0e5" stroke-width="1.8" stroke-linejoin="round" stroke-linecap="round"  d="M548 600 L528 648 L505 705"/>
<path fill="none" stroke="#dde0e5" stroke-width="2.2" stroke-linejoin="round" stroke-linecap="round"  d="M700 436 L730 447 L760 456 L782 462 L800 466"/>
<path fill="none" stroke="#d4dbde" stroke-width="2.4" stroke-linejoin="round" stroke-linecap="round"  d="M600 429 L612 433 L624 439 L640 446 L659.5 459 L680 446 L700 436 L706 427"/>
<path fill="none" stroke="#dde0e5" stroke-width="1.6" stroke-linejoin="round" stroke-linecap="round"  d="M704 566 L748 557 L790 530 L812 512"/>
<path fill="none" stroke="#dde0e5" stroke-width="1.4" stroke-linejoin="round" stroke-linecap="round"  d="M816.9 494.6 L808.3 506 L798.9 516.8 L788.8 526.9 L778 536.3 L766.6 544.9 L754.6 552.7 L745.2 558"/>
<path fill="none" stroke="#dde1e5" stroke-width="1.5" stroke-linejoin="round" stroke-linecap="round"  d="M878.3 556.2 L865.3 571.7 L851.1 586.3 L836.1 599.9 L820 612.4 L803.2 623.8"/>
<path fill="none" stroke="#dde0e5" stroke-width="2.4" stroke-linejoin="round" stroke-linecap="round"  d="M860 427 L858 470 L855 488"/>
<path fill="none" stroke="#d6dbe1" stroke-width="3.4" stroke-linejoin="round" stroke-linecap="round"  d="M832.7 474 L857 487 L881 497"/>
<path fill="none" stroke="#dde0e5" stroke-width="2" stroke-linejoin="round" stroke-linecap="round"  d="M855 488 L846 510 L838 530 L832 545"/>
<path fill="none" stroke="#dde0e5" stroke-width="1.6" stroke-linejoin="round" stroke-linecap="round"  d="M897 427 L894 470 L888 510 L874 545"/>
<path fill="none" stroke="#dde0e5" stroke-width="1.6" stroke-linejoin="round" stroke-linecap="round"  d="M906 427 L903 480 L898 520"/>
<path fill="#f0f1f2" d="M473 731 L490 712 L520 722 L560 730 L610 731 L665 727 L700 724 L749 719 L790 709 L830 698 L870 682 L911 660 L911 668 L860 696 L810 716 L760 730 L700 748 L640 758 L560 758 L520 745 L490 738Z"/>
<path fill="none" stroke="#d9dde1" stroke-width="0.8" stroke-linejoin="round" stroke-linecap="round"  d="M500 720 L540 730 L600 736 L660 733 L720 727 L780 716 L840 698 L911 664"/>
<path fill="none" stroke="#d9dde1" stroke-width="0.8" stroke-linejoin="round" stroke-linecap="round"  d="M510 728 L560 738 L620 741 L700 736"/>
<path fill="none" stroke="#f1f1f0" stroke-width="7" d="M424 427L434 471L441 521L445 560L445 600"/>
<polygon fill="#90d8ed" points="409,427 421.5,427 426.5,450 431.5,471 435.5,500 438.5,521.6 441.5,547 442.5,598 441,615 439,628 441,645 444.4,666 445,680 447,699 454.5,717 463,725 473.6,729.7 486,736 499,742 515,747.5 532,752.5 555,757.6 555,758 409,758"/>
<polygon fill="#90d8ed" points="645,758 655,755.5 680,752.5 700.7,748 718.5,741.5 734,735.5 760,727 789,717 809,709.3 833,699.5 858,690 884,676.5 911,659.5 911,711 883.5,724.6 858,737 832.8,748.7 820,758"/>
<polygon fill="#f1f2f3" points="911,711 883.5,724.6 858,737 832.8,748.7 820,758 911,758"/>
<path fill="none" stroke="#fff" stroke-width="0.8" d="M425 428q6 20 8 40M436 612l6 0M438 660l5 1M880 676l6 4M820 700l4 4M905 650l-8 6"/>
<path fill="none" stroke="#85a2c6" stroke-width="5.4" stroke-linejoin="round" stroke-linecap="round"  d="M574 427 L580 445 L593 483.5 L599 504 L608 514 L633.5 529 L646 532.5 L665 532 L693 528 L718.5 519 L744 501 L764 483.5 L777 468 L784.5 453 L788 443"/>
<path fill="none" stroke="#85a2c6" stroke-width="7" stroke-linejoin="round" stroke-linecap="round"  d="M777 427 L785 436 L792 445 L807 465.7 L832.8 486"/>
<path fill="none" stroke="#85a2c6" stroke-width="5.6" stroke-linejoin="round" stroke-linecap="round"  d="M832.8 486 L858 503.8 L883.5 521.6 L911 539"/>
<polygon fill="#85a2c6" points="773,427 806,427 801,438 797,449 806,463 797,467 786,453 778,440"/>
<path fill="none" stroke="#f7f8f9" stroke-width="1" d="M781 427L788 438M793 427L792 436"/>
<path fill="none" stroke="#85a2c6" stroke-width="2.6" stroke-linejoin="round" stroke-linecap="round"  d="M771 427 L782 440 L790 452"/>
<path fill="none" stroke="#85a2c6" stroke-width="3" stroke-linejoin="round" stroke-linecap="round"  d="M800 427 L794 438 L790 447"/>
<path fill="none" stroke="#85a2c6" stroke-width="2.6" stroke-linejoin="round" stroke-linecap="round"  d="M786 427 L789 436"/>
<path fill="none" stroke="#85a2c6" stroke-width="1.6" stroke-linejoin="round" stroke-linecap="round"  d="M838 496 L850 508 L862 514"/>
<path fill="none" stroke="#85a2c6" stroke-width="1.5" stroke-linejoin="round" stroke-linecap="round"  d="M857 487 L853 494 L858 500 L866 504"/>
<path fill="none" stroke="#85a2c6" stroke-width="1.2" stroke-linejoin="round" stroke-linecap="round"  d="M833 489 L840 485 L848 490"/>
</g>
<text x="598" y="428.5" text-anchor="middle" textLength="64" lengthAdjust="spacing" font-size="7.2" font-weight="bold" fill="#505357" stroke="#fff" stroke-width="1.6" stroke-linejoin="round" paint-order="stroke">MARLYVILLE -</text>
<text x="597.4" y="437.8" text-anchor="middle" textLength="64.7" lengthAdjust="spacing" font-size="7.2" font-weight="bold" fill="#505357" stroke="#fff" stroke-width="1.6" stroke-linejoin="round" paint-order="stroke">FONTAINEBLEAU</text>
<text x="744" y="434" text-anchor="middle" textLength="54.6" lengthAdjust="spacing" font-size="7.2" font-weight="bold" fill="#505357" stroke="#fff" stroke-width="1.6" stroke-linejoin="round" paint-order="stroke">B. W. COOPER</text>
<text x="654.4" y="468.8" text-anchor="middle" textLength="49.3" lengthAdjust="spacing" font-size="7.2" font-weight="bold" fill="#505357" stroke="#fff" stroke-width="1.6" stroke-linejoin="round" paint-order="stroke">BROADMOOR</text>
<text x="499.5" y="480.4" text-anchor="middle" textLength="75" lengthAdjust="spacing" font-size="7.2" font-weight="bold" fill="#505357" stroke="#fff" stroke-width="1.6" stroke-linejoin="round" paint-order="stroke">EAST CARROLLTON</text>
<text x="538.2" y="499.5" text-anchor="middle" textLength="36.8" lengthAdjust="spacing" font-size="7.2" font-weight="bold" fill="#505357" stroke="#fff" stroke-width="1.6" stroke-linejoin="round" paint-order="stroke">UPTOWN/</text>
<text x="538.2" y="510" text-anchor="middle" textLength="52.5" lengthAdjust="spacing" font-size="7.2" font-weight="bold" fill="#505357" stroke="#fff" stroke-width="1.6" stroke-linejoin="round" paint-order="stroke">CARROLLTON</text>
<text x="727.1" y="476.4" text-anchor="middle" textLength="38.6" lengthAdjust="spacing" font-size="7.2" font-weight="bold" fill="#505357" stroke="#fff" stroke-width="1.6" stroke-linejoin="round" paint-order="stroke">HOFFMAN</text>
<text x="727.1" y="483.8" text-anchor="middle" textLength="38.6" lengthAdjust="spacing" font-size="7.2" font-weight="bold" fill="#505357" stroke="#fff" stroke-width="1.6" stroke-linejoin="round" paint-order="stroke">TRIANGLE</text>
<text x="645.9" y="553.3" text-anchor="middle" textLength="28.2" lengthAdjust="spacing" font-size="7.2" font-weight="bold" fill="#505357" stroke="#fff" stroke-width="1.6" stroke-linejoin="round" paint-order="stroke">FRERET</text>
<text x="774.7" y="540" text-anchor="middle" textLength="56.6" lengthAdjust="spacing" font-size="7.2" font-weight="bold" fill="#505357" stroke="#fff" stroke-width="1.6" stroke-linejoin="round" paint-order="stroke">CENTRAL CITY</text>
<text x="561.5" y="553.8" text-anchor="middle" textLength="51.5" lengthAdjust="spacing" font-size="7.2" font-weight="bold" fill="#505357" stroke="#fff" stroke-width="1.6" stroke-linejoin="round" paint-order="stroke">FOURTEENTH</text>
<text x="561.2" y="561.2" text-anchor="middle" textLength="22.9" lengthAdjust="spacing" font-size="7.2" font-weight="bold" fill="#505357" stroke="#fff" stroke-width="1.6" stroke-linejoin="round" paint-order="stroke">WARD</text>
<text x="451.1" y="576" text-anchor="middle" textLength="52.6" lengthAdjust="spacing" font-size="7.2" font-weight="bold" fill="#505357" stroke="#fff" stroke-width="1.6" stroke-linejoin="round" paint-order="stroke">BLACK PEARL</text>
<text x="900.5" y="574" text-anchor="middle" textLength="63" lengthAdjust="spacing" font-size="7.2" font-weight="bold" fill="#505357" stroke="#fff" stroke-width="1.6" stroke-linejoin="round" paint-order="stroke">LOWER GARDEN</text>
<text x="900.4" y="581.2" text-anchor="middle" textLength="37.2" lengthAdjust="spacing" font-size="7.2" font-weight="bold" fill="#505357" stroke="#fff" stroke-width="1.6" stroke-linejoin="round" paint-order="stroke">DISTRICT</text>
<text x="524.4" y="611" text-anchor="middle" textLength="38.1" lengthAdjust="spacing" font-size="7.2" font-weight="bold" fill="#505357" stroke="#fff" stroke-width="1.6" stroke-linejoin="round" paint-order="stroke">AUDUBON</text>
<text x="719.1" y="610.8" text-anchor="middle" textLength="25.2" lengthAdjust="spacing" font-size="7.2" font-weight="bold" fill="#505357" stroke="#fff" stroke-width="1.6" stroke-linejoin="round" paint-order="stroke">MILAN</text>
<text x="808.4" y="623" text-anchor="middle" textLength="70.7" lengthAdjust="spacing" font-size="7.2" font-weight="bold" fill="#505357" stroke="#fff" stroke-width="1.6" stroke-linejoin="round" paint-order="stroke">GARDEN DISTRICT</text>
<text x="807.1" y="639" text-anchor="middle" textLength="45.2" lengthAdjust="spacing" font-size="7.2" font-weight="bold" fill="#505357" stroke="#fff" stroke-width="1.6" stroke-linejoin="round" paint-order="stroke">11TH WARD</text>
<text x="905" y="638.8" text-anchor="middle" textLength="48" lengthAdjust="spacing" font-size="7.2" font-weight="bold" fill="#505357" stroke="#fff" stroke-width="1.6" stroke-linejoin="round" paint-order="stroke">ST. THOMAS</text>
<text x="905" y="645.9" text-anchor="middle" textLength="58" lengthAdjust="spacing" font-size="7.2" font-weight="bold" fill="#505357" stroke="#fff" stroke-width="1.6" stroke-linejoin="round" paint-order="stroke">DEVELOPMENT</text>
<text x="906.3" y="652.9" text-anchor="middle" textLength="63.4" lengthAdjust="spacing" font-size="7.2" font-weight="bold" fill="#505357" stroke="#fff" stroke-width="1.6" stroke-linejoin="round" paint-order="stroke">NEIGHBORHOOD</text>
<text x="727.1" y="668.7" text-anchor="middle" textLength="25.8" lengthAdjust="spacing" font-size="7.2" font-weight="bold" fill="#505357" stroke="#fff" stroke-width="1.6" stroke-linejoin="round" paint-order="stroke">TOURO</text>
<text x="808" y="691.6" text-anchor="middle" textLength="60.7" lengthAdjust="spacing" font-size="7.2" font-weight="bold" fill="#505357" stroke="#fff" stroke-width="1.6" stroke-linejoin="round" paint-order="stroke">IRISH CHANNEL</text>
<text x="581.1" y="738.5" text-anchor="middle" textLength="65.2" lengthAdjust="spacing" font-size="7.2" font-weight="bold" fill="#505357" stroke="#fff" stroke-width="1.6" stroke-linejoin="round" paint-order="stroke">WEST RIVERSIDE</text>
<text x="823.4" y="446.7" font-size="11.3" fill="#202124" stroke="#fff" stroke-width="1.8" paint-order="stroke" style="-webkit-text-stroke:0.35px #202124">New Orleans</text>
<text x="457.8" y="451.4" text-anchor="middle" textLength="20" lengthAdjust="spacingAndGlyphs" font-size="6.6" fill="#484b50" stroke="#fff" stroke-width="1.5" stroke-linejoin="round" paint-order="stroke" transform="rotate(50 457.8 449.2)">Oak St</text>
<text x="525" y="428.9" text-anchor="middle" textLength="40" lengthAdjust="spacingAndGlyphs" font-size="6.6" fill="#484b50" stroke="#fff" stroke-width="1.5" stroke-linejoin="round" paint-order="stroke" transform="rotate(-50 525 426.7)">Carrollton Ave</text>
<text x="562.4" y="467.9" text-anchor="middle" textLength="33" lengthAdjust="spacingAndGlyphs" font-size="6.6" fill="#484b50" stroke="#fff" stroke-width="1.5" stroke-linejoin="round" paint-order="stroke" transform="rotate(-60 562.4 465.7)">Broadway St</text>
<text x="589.9" y="471.7" text-anchor="middle" textLength="44" lengthAdjust="spacingAndGlyphs" font-size="7.2" fill="#3f5f88" stroke="none" stroke-width="1.5" stroke-linejoin="round" paint-order="stroke" transform="rotate(72 589.9 469.5)">S Claiborne Ave</text>
<text x="467.2" y="526.2" text-anchor="middle" textLength="41" lengthAdjust="spacingAndGlyphs" font-size="6.6" fill="#484b50" stroke="#fff" stroke-width="1.5" stroke-linejoin="round" paint-order="stroke" transform="rotate(45 467.2 524)">St Charles Ave</text>
<text x="449.4" y="535.2" text-anchor="middle" textLength="28" lengthAdjust="spacingAndGlyphs" font-size="6.6" fill="#484b50" stroke="#fff" stroke-width="1.5" stroke-linejoin="round" paint-order="stroke" transform="rotate(85 449.4 533)">Leake Ave</text>
<text x="488.8" y="578.4" text-anchor="middle" textLength="33" lengthAdjust="spacingAndGlyphs" font-size="6.6" fill="#484b50" stroke="#fff" stroke-width="1.5" stroke-linejoin="round" paint-order="stroke" transform="rotate(-58 488.8 576.2)">Broadway St</text>
<text x="617" y="550.4" text-anchor="middle" textLength="38" lengthAdjust="spacingAndGlyphs" font-size="6.6" fill="#484b50" stroke="#fff" stroke-width="1.5" stroke-linejoin="round" paint-order="stroke" transform="rotate(-80 617 548.2)">Jefferson Ave</text>
<text x="416.4" y="525" text-anchor="middle" textLength="56" lengthAdjust="spacingAndGlyphs" font-size="7" fill="#3f9ec4" stroke="none" stroke-width="1.5" stroke-linejoin="round" paint-order="stroke" transform="rotate(90 416.4 522.8)">Mississippi River</text>
<text x="665" y="560.6" text-anchor="middle" textLength="38" lengthAdjust="spacingAndGlyphs" font-size="6.6" fill="#484b50" stroke="#fff" stroke-width="1.5" stroke-linejoin="round" paint-order="stroke" transform="rotate(88 665 558.4)">Napoleon Ave</text>
<text x="742.6" y="503.5" text-anchor="middle" textLength="44" lengthAdjust="spacingAndGlyphs" font-size="7.2" fill="#3f5f88" stroke="none" stroke-width="1.5" stroke-linejoin="round" paint-order="stroke" transform="rotate(-38 742.6 501.3)">S Claiborne Ave</text>
<text x="773" y="514.9" text-anchor="middle" textLength="33" lengthAdjust="spacingAndGlyphs" font-size="6.6" fill="#484b50" stroke="#fff" stroke-width="1.5" stroke-linejoin="round" paint-order="stroke" transform="rotate(55 773 512.7)">Jackson Ave</text>
<text x="806" y="507.2" text-anchor="middle" textLength="72" lengthAdjust="spacingAndGlyphs" font-size="6.6" fill="#484b50" stroke="#fff" stroke-width="1.5" stroke-linejoin="round" paint-order="stroke" transform="rotate(35 806 505)">Martin Luther King Jr Blvd</text>
<text x="747.7" y="559.2" text-anchor="middle" textLength="27" lengthAdjust="spacingAndGlyphs" font-size="6.6" fill="#484b50" stroke="#fff" stroke-width="1.5" stroke-linejoin="round" paint-order="stroke" transform="rotate(-35 747.7 557)">Lasalle St</text>
<text x="851.8" y="471.7" text-anchor="middle" textLength="30" lengthAdjust="spacingAndGlyphs" font-size="6.6" fill="#484b50" stroke="#fff" stroke-width="1.5" stroke-linejoin="round" paint-order="stroke" transform="rotate(-75 851.8 469.5)">Loyola Ave</text>
<text x="890" y="506" text-anchor="middle" textLength="24" lengthAdjust="spacingAndGlyphs" font-size="6.6" fill="#484b50" stroke="#fff" stroke-width="1.5" stroke-linejoin="round" paint-order="stroke" transform="rotate(-72 890 503.8)">Camp St</text>
<text x="909" y="457.2" text-anchor="middle" textLength="33" lengthAdjust="spacingAndGlyphs" font-size="6.6" fill="#484b50" stroke="#fff" stroke-width="1.5" stroke-linejoin="round" paint-order="stroke" transform="rotate(-80 909 455)">Magazine St</text>
<text x="859.4" y="542.8" text-anchor="middle" textLength="41" lengthAdjust="spacingAndGlyphs" font-size="6.6" fill="#484b50" stroke="#fff" stroke-width="1.5" stroke-linejoin="round" paint-order="stroke" transform="rotate(-62 859.4 540.6)">St Charles Ave</text>
<text x="858" y="564.2" text-anchor="middle" textLength="31" lengthAdjust="spacingAndGlyphs" font-size="6.6" fill="#484b50" stroke="#fff" stroke-width="1.5" stroke-linejoin="round" paint-order="stroke" transform="rotate(-58 858 562)">Prytania St</text>
<text x="476" y="646.8" text-anchor="middle" textLength="35" lengthAdjust="spacingAndGlyphs" font-size="6.6" fill="#484b50" stroke="#fff" stroke-width="1.5" stroke-linejoin="round" paint-order="stroke" transform="rotate(30 476 644.6)">Magazine St</text>
<text x="528" y="650.6" text-anchor="middle" textLength="42" lengthAdjust="spacingAndGlyphs" font-size="6.6" fill="#484b50" stroke="#fff" stroke-width="1.5" stroke-linejoin="round" paint-order="stroke" transform="rotate(-68 528 648.4)">Henry Clay Ave</text>
<text x="594" y="653.7" text-anchor="middle" textLength="38" lengthAdjust="spacingAndGlyphs" font-size="6.6" fill="#484b50" stroke="#fff" stroke-width="1.5" stroke-linejoin="round" paint-order="stroke" transform="rotate(-78 594 651.5)">Jefferson Ave</text>
<text x="666" y="646.2" text-anchor="middle" textLength="42" lengthAdjust="spacingAndGlyphs" font-size="6.6" fill="#484b50" stroke="#fff" stroke-width="1.5" stroke-linejoin="round" paint-order="stroke" transform="rotate(-4 666 644)">St Charles Ave</text>
<text x="605" y="692.5" text-anchor="middle" textLength="36" lengthAdjust="spacingAndGlyphs" font-size="6.6" fill="#484b50" stroke="#fff" stroke-width="1.5" stroke-linejoin="round" paint-order="stroke" transform="rotate(5 605 690.3)">Magazine St</text>
<text x="533.2" y="716.6" text-anchor="middle" textLength="48" lengthAdjust="spacingAndGlyphs" font-size="6.6" fill="#484b50" stroke="#fff" stroke-width="1.5" stroke-linejoin="round" paint-order="stroke" transform="rotate(17 533.2 714.4)">Tchoupitoulas St</text>
<text x="745" y="625.2" text-anchor="middle" textLength="39" lengthAdjust="spacingAndGlyphs" font-size="6.6" fill="#484b50" stroke="#fff" stroke-width="1.5" stroke-linejoin="round" paint-order="stroke" transform="rotate(72 745 623)">Louisiana Ave</text>
<text x="844" y="612.5" text-anchor="middle" textLength="33" lengthAdjust="spacingAndGlyphs" font-size="6.6" fill="#484b50" stroke="#fff" stroke-width="1.5" stroke-linejoin="round" paint-order="stroke" transform="rotate(52 844 610.3)">Jackson Ave</text>
<text x="676.6" y="681.1" text-anchor="middle" textLength="38" lengthAdjust="spacingAndGlyphs" font-size="6.6" fill="#484b50" stroke="#fff" stroke-width="1.5" stroke-linejoin="round" paint-order="stroke" transform="rotate(88 676.6 678.9)">Napoleon Ave</text>
<text x="753.5" y="677.2" text-anchor="middle" textLength="36" lengthAdjust="spacingAndGlyphs" font-size="6.6" fill="#484b50" stroke="#fff" stroke-width="1.5" stroke-linejoin="round" paint-order="stroke" transform="rotate(-20 753.5 675)">Magazine St</text>
<text x="749" y="713.6" text-anchor="middle" textLength="48" lengthAdjust="spacingAndGlyphs" font-size="6.6" fill="#484b50" stroke="#fff" stroke-width="1.5" stroke-linejoin="round" paint-order="stroke" transform="rotate(-4 749 711.4)">Tchoupitoulas St</text>
<text x="879.7" y="672.2" text-anchor="middle" textLength="48" lengthAdjust="spacingAndGlyphs" font-size="6.6" fill="#484b50" stroke="#fff" stroke-width="1.5" stroke-linejoin="round" paint-order="stroke" transform="rotate(-27 879.7 670)">Tchoupitoulas St</text>
<text x="792" y="740.7" text-anchor="middle" textLength="52" lengthAdjust="spacingAndGlyphs" font-size="7" fill="#3f9ec4" stroke="none" stroke-width="1.5" stroke-linejoin="round" paint-order="stroke" transform="rotate(-17 792 738.5)">Mississippi River</text>
<path fill="#8a1a5c" stroke="#6d1148" stroke-width="0.5" d="M659 595.2C659 595.2 652.2 588.6 652.2 583.6A6.8 6.8 0 0 1 665.8 583.6C665.8 588.6 659 595.2 659 595.2z"/><circle cx="659" cy="583.6" r="2.5" fill="#fff"/>
<g transform="translate(817.6,471.6)"><rect x="0.6" y="0" width="9" height="4" rx="0.8" fill="#fff" stroke="#555" stroke-width="0.7"/><path d="M0.4 4.4H9.8V10C9.8 12.4 7.4 13.2 5.1 14.6C2.8 13.2 0.4 12.4 0.4 10z" fill="#fff" stroke="#555" stroke-width="0.7"/><text x="5.1" y="3.3" font-size="3" text-anchor="middle" fill="#444" font-weight="bold">BUS</text><text x="5.1" y="10.6" font-size="5" text-anchor="middle" fill="#444" font-weight="bold">90</text></g>
<circle cx="836.6" cy="480" r="3.6" fill="#e8edf3" stroke="#44546a" stroke-width="1"/><rect x="834.6" y="478" width="4" height="3.6" rx="0.8" fill="none" stroke="#44546a" stroke-width="0.8"/>
<circle cx="879.7" cy="505" r="3.4" fill="#c2ebd3" stroke="#9fd8b5" stroke-width="0.8"/>
<rect x="881" y="432.8" width="24" height="24" rx="1.5" fill="#fff"/><path fill="none" stroke="#666" stroke-width="1.5" d="M888 442.8V439.6H891.2M894.8 439.6H898V442.8M898 446.6V449.8H894.8M891.2 449.8H888V446.6"/>
<circle cx="892.6" cy="732.2" r="12" fill="#fff" stroke="#e6e6e6" stroke-width="0.6"/><g fill="none" stroke="#666" stroke-width="1.2" stroke-linejoin="round" stroke-linecap="round"><path d="M890.4 727.6L892.6 725.4L894.8 727.6M890.4 736.8L892.6 739L894.8 736.8M888 730L885.8 732.2L888 734.4M897.2 730L899.4 732.2L897.2 734.4"/></g>
<text x="413.4" y="754" font-size="12.2" font-weight="bold" fill="#fdfdfd" stroke="#aab0b6" stroke-width="0.8" paint-order="stroke" textLength="34.5" lengthAdjust="spacingAndGlyphs" opacity="0.9">Google</text>
<rect x="700.7" y="750" width="211" height="8" fill="#f5f5f5" opacity="0.85"/>
<text x="702.7" y="756.3" font-size="6.1" fill="#2a2a2a" textLength="51.3" lengthAdjust="spacingAndGlyphs">Keyboard shortcuts</text>
<text x="761" y="756.3" font-size="6.1" fill="#2a2a2a" textLength="65.4" lengthAdjust="spacingAndGlyphs">Map data ©2025 Google</text>
<text x="833.5" y="756.3" font-size="6.1" fill="#2a2a2a" textLength="16.5" lengthAdjust="spacingAndGlyphs">Terms</text>
<text x="857.4" y="756.3" font-size="6.1" fill="#2a2a2a" textLength="49" lengthAdjust="spacingAndGlyphs">Report a map error</text>
<path stroke="#ddd" stroke-width="0.6" d="M757.6 750.5V757.5"/>
</svg></div>
<div class="t" style="left:91.7px;top:439.0px;font-size:13px;color:#333;letter-spacing:-0.30px">Employee Status</div>
<div class="t" style="left:295.8px;top:441.0px;font-size:9px;color:#333;font-weight:bold;letter-spacing:-0.45px">Today</div>
<div class="t" style="left:345.8px;top:441.0px;font-size:9px;color:#7a7a7a;font-weight:bold;letter-spacing:-0.22px">Tomorrow</div>
<div class="t" style="left:97.4px;top:485.0px;font-size:6.6px;color:#fff;letter-spacing:0.64px">IA</div>
<div class="t" style="left:118.7px;top:482.0px;font-size:10.8px;color:#3a3a3a;font-weight:bold;letter-spacing:-0.29px">Irontmp Ay6qv</div>
<div class="t" style="left:125.0px;top:512.0px;font-size:7.8px;color:#444;letter-spacing:0.12px">8:15pm - 9:15pm</div>
<div class="t" style="left:209.5px;top:512.0px;font-size:7.8px;color:#444;letter-spacing:-0.14px">John Doe • Job 1</div>
<div class="t" style="left:104.4px;top:743.0px;font-size:8.2px;color:#6c6c6c;font-weight:bold;letter-spacing:-0.28px">Give us feedback</div>

<!-- rec -->
<div class="card" style="left:81px;top:782px;width:403px;height:160px"></div>
<div class="hl" style="left:81px;top:817.5px;width:403px"></div>
<div class="hl" style="left:81px;top:880.5px;width:396px"></div>
<svg style="left:90.4px;top:840.7px" width="14.4" height="14.4" viewBox="0 0 24 24"><path fill="#d81b60" d="M20 4H4c-1.1 0-1.99.9-1.99 2L2 18c0 1.1.9 2 2 2h16c1.1 0 2-.9 2-2V6c0-1.1-.9-2-2-2zm0 4l-8 5-8-5V6l8 5 8-5v2z"/></svg>
<svg style="left:90.4px;top:902.5px" width="14.4" height="14.4" viewBox="0 0 24 24"><path fill="#d81b60" d="M20 4H4c-1.1 0-1.99.9-1.99 2L2 18c0 1.1.9 2 2 2h16c1.1 0 2-.9 2-2V6c0-1.1-.9-2-2-2zm0 4l-8 5-8-5V6l8 5 8-5v2z"/></svg>
<svg style="left:477.2px;top:821.2px" width="5.4" height="3.6" viewBox="0 0 10 6"><path fill="#777" d="M0 6h10L5 0z"/></svg>
<div class="abs" style="left:477.6px;top:829px;width:4.4px;height:110px;background:#8c8c8c;border-radius:2px"></div>
<div class="t" style="left:91.4px;top:794.0px;font-size:13px;color:#333;letter-spacing:-0.22px">Recent activity</div>
<div class="t" style="left:114.3px;top:835.0px;font-size:9px;color:#cc3a6e;letter-spacing:0.15px">Job scheduled email sent to john.doe@example.com</div>
<div class="t" style="left:114.3px;top:852.0px;font-size:9px;color:#cc3a6e;letter-spacing:0.04px">Fri, Jul 11 at 12:42 AM</div>
<div class="t" style="left:434.8px;top:845.0px;font-size:9px;color:#cc3a6e;letter-spacing:-0.04px">Job #1</div>
<div class="t" style="left:114.3px;top:897.0px;font-size:9px;color:#cc3a6e;letter-spacing:0.15px">Job scheduled email sent to john.doe@example.com</div>
<div class="t" style="left:114.3px;top:914.0px;font-size:9px;color:#cc3a6e;letter-spacing:0.04px">Fri, Jul 11 at 12:42 AM</div>
<div class="t" style="left:434.8px;top:907.0px;font-size:9px;color:#cc3a6e;letter-spacing:-0.04px">Job #1</div>

<!-- sch -->
<div class="card" style="left:507.4px;top:786.5px;width:403.4px;height:160px"></div>
<div class="hl" style="left:507.4px;top:822.3px;width:403.4px"></div>
<div class="t" style="left:517.7px;top:798.0px;font-size:13px;color:#333;letter-spacing:-0.36px">Schedule</div>
<div class="t" style="left:837.6px;top:804.0px;font-size:9px;color:#3a3ab8;letter-spacing:0.07px">View schedule</div>

<!-- hdr -->
<div class="t" style="left:80.7px;top:97.0px;font-size:22px;color:#2a2a2a;letter-spacing:0.51px">Hi, John Doe</div>

</div></div>
<svg style="left:0;top:0" width="1024" height="962"><rect x="70" y="37.1" width="884.3" height="887.2" rx="16.5" fill="none" stroke="#3d3f3c" stroke-width="1.5"/></svg>
</body>
</html>
